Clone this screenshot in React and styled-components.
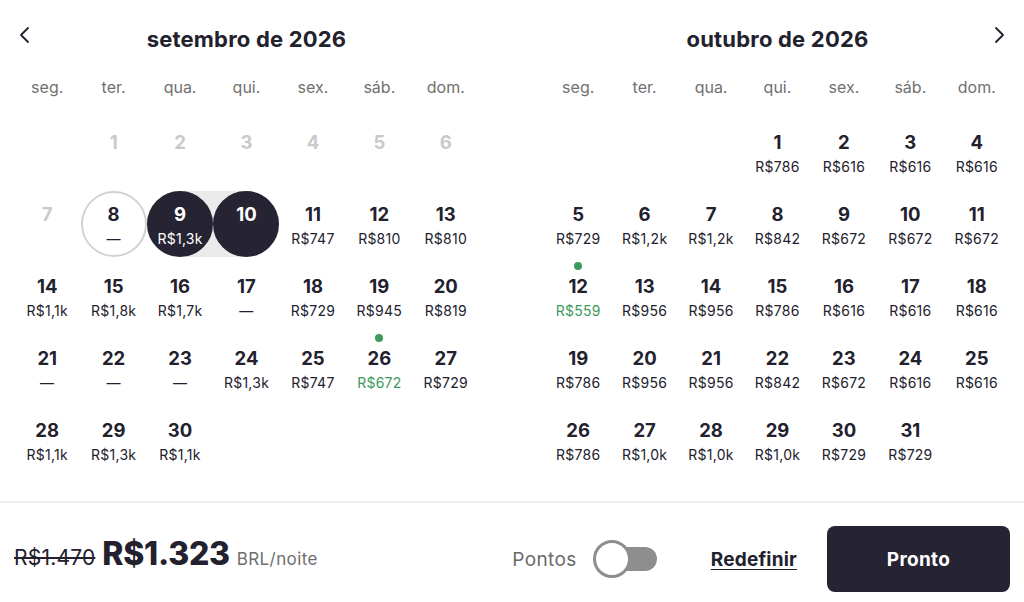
import styled, { createGlobalStyle, css } from "styled-components";

const GlobalStyle = createGlobalStyle`
  html, body { margin: 0; padding: 0; background: #fff; }
  * { box-sizing: border-box; }
`;

const INK = "#22212d";

const Page = styled.div`
  width: 1024px;
  height: 602px;
  display: flex;
  flex-direction: column;
  background: #fff;
  color: ${INK};
  font-family: Inter, "Noto Sans", "Liberation Sans", sans-serif;
  overflow: hidden;
`;

const Months = styled.div`
  height: 501px;
  display: flex;
  gap: 66px;
  padding: 0 14px;
`;

const Month = styled.section`
  flex: 1;
  position: relative;
`;

const Title = styled.h2`
  margin: 0;
  height: 78px;
  line-height: 78px;
  text-align: center;
  font-size: 22px;
  font-weight: 700;
  letter-spacing: 0.2px;
`;

const Nav = styled.button`
  position: absolute;
  top: 24px;
  ${(p) => (p.$side === "left" ? "left: 0;" : "right: 0;")}
  width: 22px;
  height: 22px;
  padding: 0;
  border: none;
  background: none;
  color: ${INK};
  display: flex;
  align-items: center;
  justify-content: center;
  cursor: pointer;
`;

const Weekdays = styled.div`
  display: grid;
  grid-template-columns: repeat(7, 1fr);
  height: 18px;
  line-height: 18px;
  font-size: 16px;
  color: #717171;
  text-align: center;
`;

const Grid = styled.div`
  margin-top: 23px;
  display: grid;
  grid-template-columns: repeat(7, 1fr);
  grid-auto-rows: 66px;
  row-gap: 6px;
`;

const Cell = styled.div`
  position: relative;
  display: flex;
  justify-content: center;
  ${(p) =>
    p.$band &&
    css`
      &::before {
        content: "";
        position: absolute;
        top: 0;
        bottom: 0;
        ${p.$band === "start" ? "left: 50%; right: 0;" : "left: 0; right: 50%;"}
        background: #ebebeb;
      }
    `}
`;

const Day = styled.div`
  position: relative;
  z-index: 1;
  width: 66px;
  height: 66px;
  border-radius: 50%;
  display: flex;
  flex-direction: column;
  align-items: center;
  border: 2px solid transparent;
  padding-top: 10px;
  ${(p) =>
    p.$state === "selected" &&
    css`
      background: #262433;
      border-color: #262433;
      color: #fff;
    `}
  ${(p) =>
    p.$state === "hover" &&
    css`
      border-color: #d2d2d2;
    `}
`;

const Num = styled.span`
  font-size: 18.5px;
  line-height: 22px;
  font-weight: 700;
  color: ${(p) => (p.$muted ? "#c9c9c9" : "inherit")};
`;

const Price = styled.span`
  margin-top: 5px;
  font-size: 14px;
  line-height: 18px;
  letter-spacing: 0.25px;
  color: ${(p) => (p.$best ? "#3e9a5c" : "inherit")};
`;

const Dot = styled.span`
  position: absolute;
  top: -1px;
  left: 50%;
  margin-left: -4px;
  width: 8px;
  height: 8px;
  border-radius: 50%;
  background: #3e9a5c;
`;

const Footer = styled.footer`
  flex: 1;
  border-top: 2px solid #ededed;
  display: flex;
  align-items: center;
  padding: 23px 14px 10px;
`;

const PriceGroup = styled.div`
  display: flex;
  align-items: baseline;
  gap: 7px;
  margin-bottom: 12px;
`;

const OldPrice = styled.span`
  font-size: 21px;
  letter-spacing: 0.2px;
  text-decoration: line-through;
  text-decoration-thickness: 1.5px;
`;

const NewPrice = styled.span`
  font-size: 32px;
  font-weight: 800;
  letter-spacing: -0.3px;
`;

const Unit = styled.span`
  font-size: 17px;
  letter-spacing: 0.4px;
  color: #6e6e6e;
`;

const Actions = styled.div`
  margin-left: auto;
  display: flex;
  align-items: center;
`;

const ToggleLabel = styled.span`
  font-size: 19px;
  letter-spacing: 0.4px;
  color: #6a6a6a;
`;

const Toggle = styled.button`
  position: relative;
  margin-left: 16px;
  width: 64px;
  height: 38px;
  padding: 0;
  border: none;
  background: none;
  cursor: pointer;

  &::before {
    content: "";
    position: absolute;
    left: 16px;
    right: 0;
    top: 7px;
    height: 24px;
    border-radius: 12px;
    background: #8e8e8e;
  }
`;

const Knob = styled.span`
  position: absolute;
  left: 0;
  top: 0;
  width: 38px;
  height: 38px;
  border-radius: 50%;
  background: #fff;
  border: 3px solid #8e8e8e;
`;

const Reset = styled.button`
  margin-left: 54px;
  padding: 0;
  border: none;
  background: none;
  font-family: inherit;
  font-size: 19px;
  font-weight: 700;
  letter-spacing: 0.2px;
  color: ${INK};
  text-decoration: underline;
  text-underline-offset: 3px;
  cursor: pointer;
`;

const Done = styled.button`
  margin-left: 30px;
  width: 183px;
  height: 66px;
  border: none;
  border-radius: 8px;
  background: #262433;
  color: #fff;
  font-family: inherit;
  font-size: 19px;
  font-weight: 700;
  letter-spacing: 0.3px;
  cursor: pointer;
`;

const Chevron = ({ dir }) => (
  <svg width="12" height="18" viewBox="0 0 12 18" fill="none">
    <polyline
      points={dir === "left" ? "9,2 2,9 9,16" : "3,2 10,9 3,16"}
      stroke="currentColor"
      strokeWidth="1.8"
      strokeLinecap="round"
      strokeLinejoin="round"
    />
  </svg>
);

const WEEKDAYS = ["seg.", "ter.", "qua.", "qui.", "sex.", "sáb.", "dom."];

const september = {
  title: "setembro de 2026",
  offset: 1,
  days: [
    { muted: true }, { muted: true }, { muted: true }, { muted: true },
    { muted: true }, { muted: true }, { muted: true },
    { price: "—", state: "hover" },
    { price: "R$1,3k", state: "selected", band: "start" },
    { state: "selected", band: "end" },
    { price: "R$747" }, { price: "R$810" }, { price: "R$810" },
    { price: "R$1,1k" }, { price: "R$1,8k" }, { price: "R$1,7k" },
    { price: "—" }, { price: "R$729" }, { price: "R$945" }, { price: "R$819" },
    { price: "—" }, { price: "—" }, { price: "—" }, { price: "R$1,3k" },
    { price: "R$747" }, { price: "R$672", best: true }, { price: "R$729" },
    { price: "R$1,1k" }, { price: "R$1,3k" }, { price: "R$1,1k" },
  ],
};

const october = {
  title: "outubro de 2026",
  offset: 3,
  days: [
    "R$786", "R$616", "R$616", "R$616",
    "R$729", "R$1,2k", "R$1,2k", "R$842", "R$672", "R$672", "R$672",
    "R$559", "R$956", "R$956", "R$786", "R$616", "R$616", "R$616",
    "R$786", "R$956", "R$956", "R$842", "R$672", "R$616", "R$616",
    "R$786", "R$1,0k", "R$1,0k", "R$1,0k", "R$729", "R$729",
  ].map((price) => ({ price, best: price === "R$559" })),
};

const MonthView = ({ data, nav }) => (
  <Month>
    {nav && (
      <Nav $side={nav} aria-label={nav === "left" ? "Anterior" : "Próximo"}>
        <Chevron dir={nav} />
      </Nav>
    )}
    <Title>{data.title}</Title>
    <Weekdays>
      {WEEKDAYS.map((w) => (
        <span key={w}>{w}</span>
      ))}
    </Weekdays>
    <Grid>
      {Array.from({ length: data.offset }, (_, i) => (
        <div key={`e${i}`} />
      ))}
      {data.days.map((d, i) => (
        <Cell key={i} $band={d.band}>
          {d.best && <Dot />}
          <Day $state={d.state}>
            <Num $muted={d.muted}>{i + 1}</Num>
            {d.price && <Price $best={d.best}>{d.price}</Price>}
          </Day>
        </Cell>
      ))}
    </Grid>
  </Month>
);

const App = () => (
  <>
    <GlobalStyle />
    <Page>
      <Months>
        <MonthView data={september} nav="left" />
        <MonthView data={october} nav="right" />
      </Months>
      <Footer>
        <PriceGroup>
          <OldPrice>R$1.470</OldPrice>
          <NewPrice>R$1.323</NewPrice>
          <Unit>BRL/noite</Unit>
        </PriceGroup>
        <Actions>
          <ToggleLabel>Pontos</ToggleLabel>
          <Toggle aria-label="Pontos">
            <Knob />
          </Toggle>
          <Reset>Redefinir</Reset>
          <Done>Pronto</Done>
        </Actions>
      </Footer>
    </Page>
  </>
);

export default App;
